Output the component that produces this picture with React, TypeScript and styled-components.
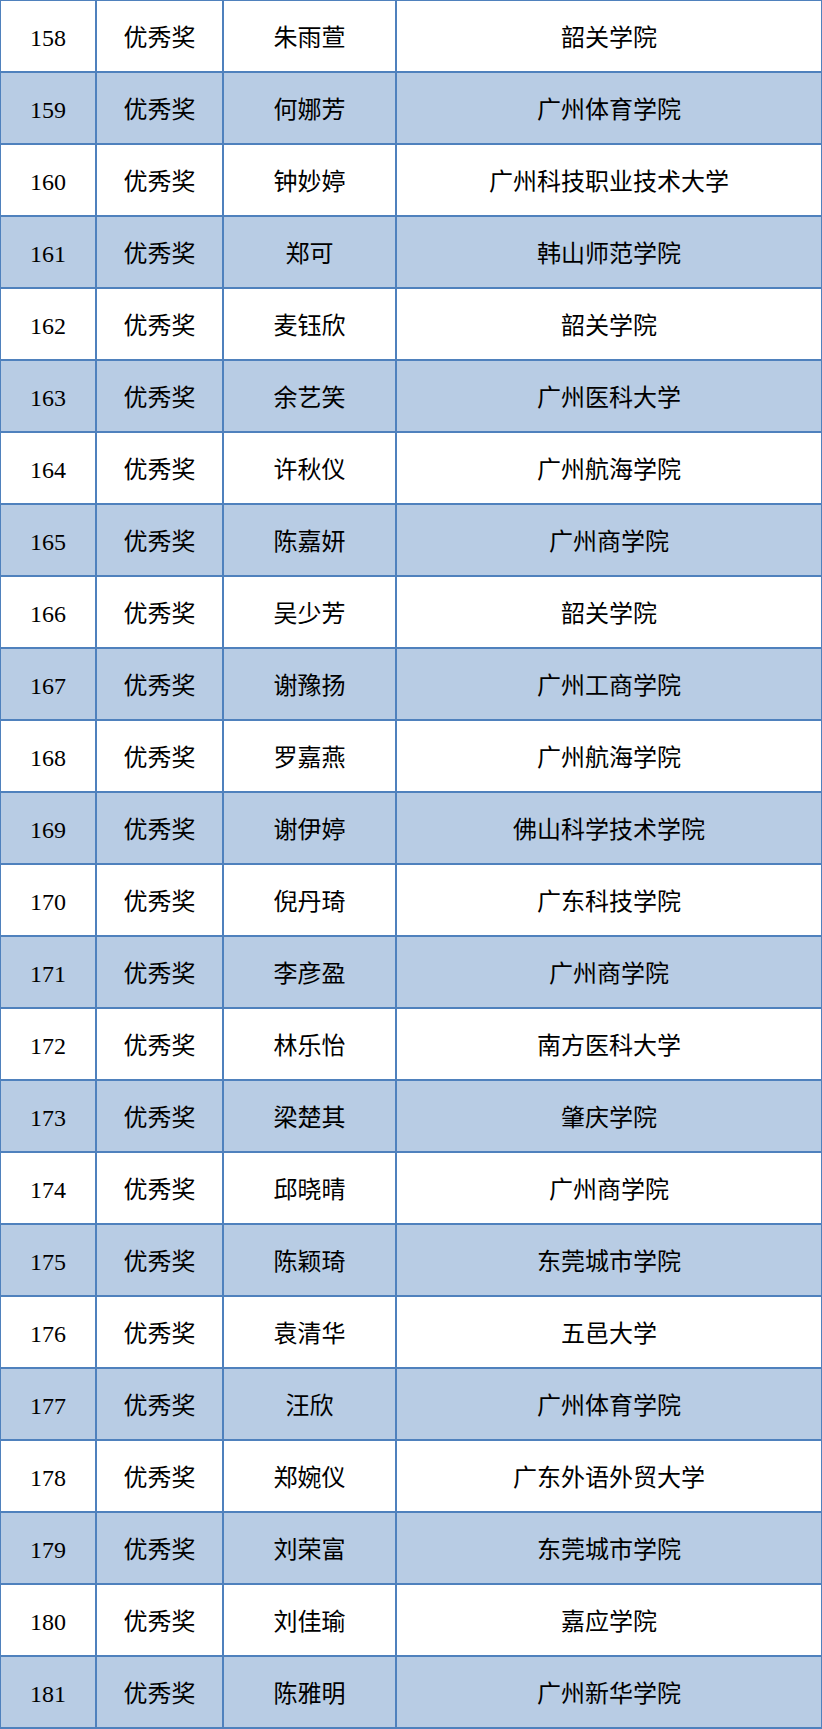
import React from "react";
import styled, { createGlobalStyle } from "styled-components";

const GlobalStyle = createGlobalStyle`
  html, body {
    margin: 0;
    padding: 0;
    background: #ffffff;
    overflow: hidden;
  }
  body {
    font-family: "Liberation Serif", "Noto Sans CJK SC", serif;
  }
`;

const Table = styled.div`
  margin: -1px 0 0 -1px;
  width: 824px;
  box-sizing: border-box;
  display: flex;
  flex-direction: column;
  gap: 2px;
  padding: 2px;
  background: #4f81bd;
`;

const Row = styled.div`
  display: grid;
  grid-template-columns: 94px 125px 171px 424px;
  gap: 2px;
  height: 70px;
`;

const Cell = styled.div<{ $shaded: boolean }>`
  background: ${(p) => (p.$shaded ? "#b8cce4" : "#ffffff")};
  display: flex;
  align-items: center;
  justify-content: center;
  padding-top: 4px;
  box-sizing: border-box;
  font-family: "Liberation Serif", "Noto Sans CJK SC", serif;
  font-size: 24px;
  line-height: 1;
  color: #000000;
  white-space: nowrap;
`;

const rows: [number, string, string][] = [
  [158, "朱雨萱", "韶关学院"],
  [159, "何娜芳", "广州体育学院"],
  [160, "钟妙婷", "广州科技职业技术大学"],
  [161, "郑可", "韩山师范学院"],
  [162, "麦钰欣", "韶关学院"],
  [163, "余艺笑", "广州医科大学"],
  [164, "许秋仪", "广州航海学院"],
  [165, "陈嘉妍", "广州商学院"],
  [166, "吴少芳", "韶关学院"],
  [167, "谢豫扬", "广州工商学院"],
  [168, "罗嘉燕", "广州航海学院"],
  [169, "谢伊婷", "佛山科学技术学院"],
  [170, "倪丹琦", "广东科技学院"],
  [171, "李彦盈", "广州商学院"],
  [172, "林乐怡", "南方医科大学"],
  [173, "梁楚其", "肇庆学院"],
  [174, "邱晓晴", "广州商学院"],
  [175, "陈颖琦", "东莞城市学院"],
  [176, "袁清华", "五邑大学"],
  [177, "汪欣", "广州体育学院"],
  [178, "郑婉仪", "广东外语外贸大学"],
  [179, "刘荣富", "东莞城市学院"],
  [180, "刘佳瑜", "嘉应学院"],
  [181, "陈雅明", "广州新华学院"],
];

export default function App() {
  return (
    <>
      <GlobalStyle />
      <Table>
        {rows.map(([no, name, school], i) => {
          const shaded = i % 2 === 1;
          return (
            <Row key={no}>
              <Cell $shaded={shaded}>{no}</Cell>
              <Cell $shaded={shaded}>优秀奖</Cell>
              <Cell $shaded={shaded}>{name}</Cell>
              <Cell $shaded={shaded}>{school}</Cell>
            </Row>
          );
        })}
      </Table>
    </>
  );
}
